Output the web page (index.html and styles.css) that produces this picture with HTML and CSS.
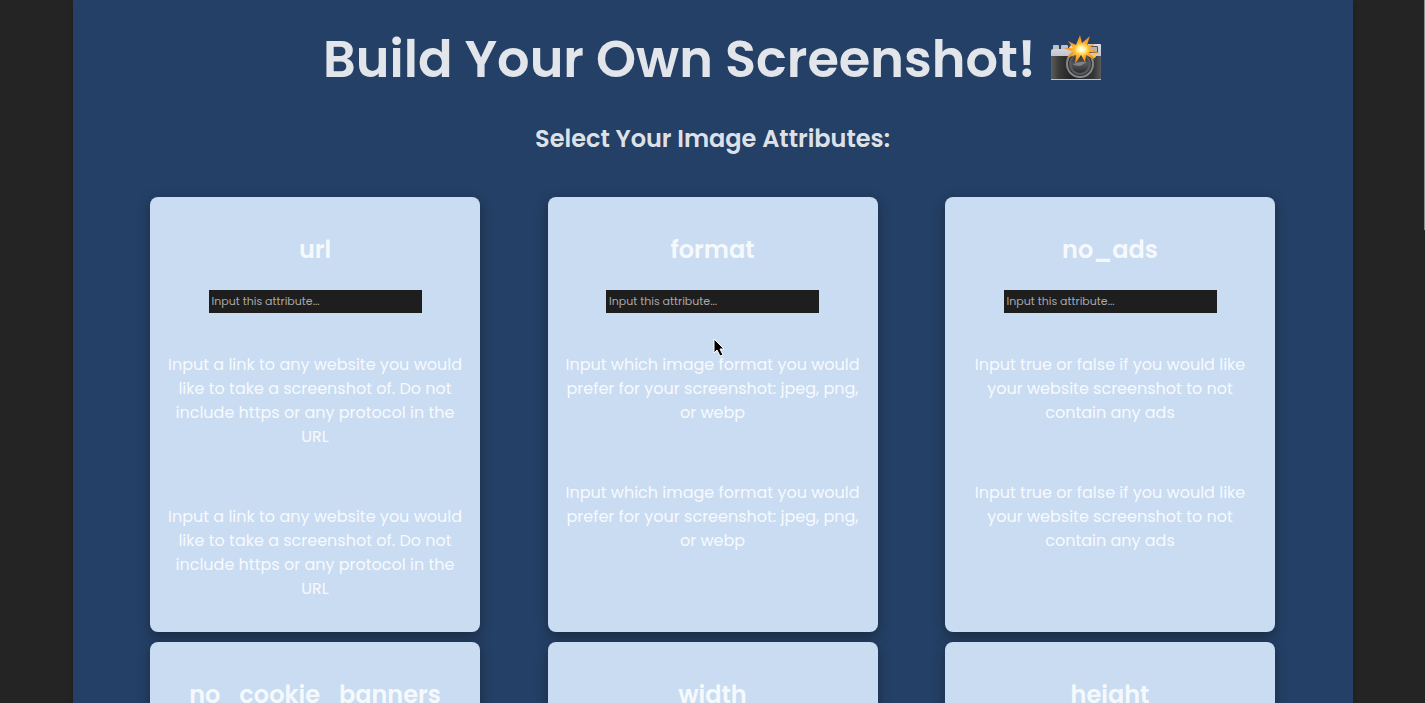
FILE: index.html
```html
<!DOCTYPE html>
<html lang="en">
<head>
<meta charset="utf-8">
<meta name="viewport" content="width=device-width, initial-scale=1">
<title>Build Your Own Screenshot!</title>
<link rel="stylesheet" href="styles.css">
</head>
<body>
<main class="panel">
  <h1 class="title">Build Your Own Screenshot!
    <svg class="camera" viewBox="0 0 52 46" role="img" aria-label="Camera with flash">
      <defs>
        <linearGradient id="metal" x1="0" y1="0" x2="0" y2="1"><stop offset="0" stop-color="#dcdee6"/><stop offset="1" stop-color="#c0c3cc"/></linearGradient>
        <linearGradient id="leather" x1="0" y1="0" x2="1" y2="0"><stop offset="0" stop-color="#5c5c5a"/><stop offset=".15" stop-color="#3c3c3a"/><stop offset=".4" stop-color="#222"/><stop offset=".85" stop-color="#343434"/><stop offset="1" stop-color="#5a5a5a"/></linearGradient>
        <linearGradient id="glass" x1="0" y1="0" x2="0" y2="1"><stop offset="0" stop-color="#303336"/><stop offset=".5" stop-color="#55585a"/><stop offset="1" stop-color="#292b2d"/></linearGradient>
        <radialGradient id="flash"><stop offset="0" stop-color="#fff"/><stop offset=".2" stop-color="#fff3a0"/><stop offset=".45" stop-color="#ffb52d"/><stop offset="1" stop-color="#f07a1c"/></radialGradient>
      </defs>
      <path d="M3 10q0-1 1-1h4q1 0 1 1v5H3zM11 10q0-1 1-1h5q1 0 1 1v5h-7z" fill="#bcc0c8"/>
      <path d="M1 15q0-2 2-2h15l3-4h16l1-1h12q1 0 1 1v12H1z" fill="url(#metal)"/>
      <rect x="1" y="20" width="50" height="23" fill="url(#leather)"/>
      <path d="M1 43h50v1H1z" fill="#c0c3c8"/>
      <rect x="38" y="10" width="10" height="7" rx="1" fill="#55504b"/>
      <rect x="39" y="11" width="8" height="5" fill="#b4b3aa"/>
      <circle cx="44" cy="20" r="2" fill="#f7c849"/>
      <circle cx="30" cy="28" r="14" fill="#85888b"/>
      <circle cx="30" cy="28" r="12" fill="#2c2e30"/>
      <circle cx="30" cy="28" r="11" fill="#595c5e"/>
      <circle cx="30" cy="28" r="9" fill="url(#glass)"/>
      <path d="M23 29q5-4 14-3l-7 4z" fill="#aaa" opacity=".55"/>
      <path d="M30 -1l2 8 8-7-3 9 8-1-6 4 10 5-10-1 6 8-9-5-1 7-4-7-6 9 1-9-10 3 7-6-9-4 9 0-5-7 8 4z" fill="url(#flash)"/>
    </svg>
  </h1>
  <h2 class="subtitle">Select Your Image Attributes:</h2>
  <form class="cards">
    <section class="card">
      <h2 class="name"><label for="url">url</label></h2>
      <input class="field" id="url" type="text" placeholder="Input this attribute...">
      <p class="text">Input a link to any website you would like to take a screenshot of. Do not include https or any protocol in the URL</p>
      <p class="text">Input a link to any website you would like to take a screenshot of. Do not include https or any protocol in the URL</p>
    </section>
    <section class="card">
      <h2 class="name"><label for="format">format</label></h2>
      <input class="field" id="format" type="text" placeholder="Input this attribute...">
      <p class="text">Input which image format you would prefer for your screenshot: jpeg, png, or webp</p>
      <p class="text">Input which image format you would prefer for your screenshot: jpeg, png, or webp</p>
    </section>
    <section class="card">
      <h2 class="name"><label for="no_ads">no_ads</label></h2>
      <input class="field" id="no_ads" type="text" placeholder="Input this attribute...">
      <p class="text">Input true or false if you would like your website screenshot to not contain any ads</p>
      <p class="text">Input true or false if you would like your website screenshot to not contain any ads</p>
    </section>
    <section class="card">
      <h2 class="name"><label for="no_cookie_banners">no_cookie_banners</label></h2>
      <input class="field" id="no_cookie_banners" type="text" placeholder="Input this attribute...">
    </section>
    <section class="card">
      <h2 class="name"><label for="width">width</label></h2>
      <input class="field" id="width" type="text" placeholder="Input this attribute...">
    </section>
    <section class="card">
      <h2 class="name"><label for="height">height</label></h2>
      <input class="field" id="height" type="text" placeholder="Input this attribute...">
    </section>
  </form>
</main>
<div class="scroll-thumb"></div>
<svg class="pointer" viewBox="0 0 12 19" aria-hidden="true"><path d="M1 1v14l3-3 3 6 3-1-3-6h4z" fill="#000" stroke="#fff" stroke-width="1"/></svg>
</body>
</html>
```
FILE: styles.css
```css
* {
  box-sizing: border-box;
}

body {
  margin: 0;
  height: 100vh;
  overflow: hidden;
  background: #242424;
  color: rgba(255, 255, 255, 0.87);
  font-family: Poppins, Inter, "Liberation Sans", sans-serif;
  font-size: 16px;
  line-height: 24px;
  text-align: center;
}

.panel {
  max-width: 1280px;
  min-height: 100vh;
  margin: 0 auto;
  padding: 31px 10px;
  background: #244066;
  box-shadow: 0 4px 6px rgba(0, 0, 0, 0.2);
}

.title {
  display: flex;
  justify-content: center;
  align-items: center;
  gap: 14px;
  margin: 0;
  font-size: 51px;
  font-weight: 600;
  line-height: 56px;
}

.camera {
  width: 52px;
  height: 46px;
  overflow: visible;
}

.subtitle {
  margin: 34px 0 40px;
  font-size: 24px;
  font-weight: 600;
  line-height: 36px;
}

.cards {
  display: flex;
  flex-wrap: wrap;
  justify-content: space-evenly;
  row-gap: 10px;
}

.card {
  display: flex;
  flex-direction: column;
  align-items: center;
  width: 330px;
  min-height: 435px;
  padding: 35px 16px 15px;
  border-radius: 8px;
  background: #cadcf2;
  box-shadow: 0 4px 12px rgba(20, 24, 32, 0.5);
}

.name {
  margin: 0 0 22px;
  font-size: 24px;
  font-weight: 600;
  line-height: 36px;
}

.field {
  width: 213px;
  height: 23px;
  padding: 0 3px;
  border: 0;
  border-radius: 0;
  background: #1e1e1e;
  color: #fff;
  font-family: inherit;
  font-size: 11px;
  outline: 0;
}

.field::placeholder {
  color: #a9a9a9;
  opacity: 1;
}

.text {
  margin: 40px 0 16px;
  font-weight: 400;
}

.scroll-thumb {
  position: absolute;
  top: 0;
  right: 0;
  width: 1px;
  height: 230px;
  background: #8c8c8c;
}

.pointer {
  position: absolute;
  top: 338px;
  left: 713px;
  width: 12px;
  height: 19px;
}
```
